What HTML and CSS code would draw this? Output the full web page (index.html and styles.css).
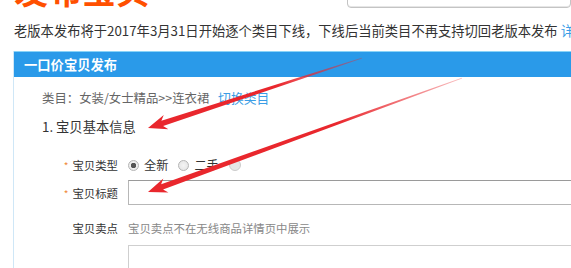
FILE: index.html
```html
<!DOCTYPE html>
<html>
    <head>
        <title>一口价宝贝发布</title>
        <link rel="stylesheet" href="styles.css">
    </head>
    <body>
        <div class="top">
            <div class="brand">发布宝贝</div>
            <div class="search"></div>
        </div>

        <p class="notice">老版本发布将于2017年3月31日开始逐个类目下线，下线后当前类目不再支持切回老版本发布 <a href="#">详情</a></p>

        <div class="panel">
            <div class="panel-head">一口价宝贝发布</div>
            <div class="panel-body">
                <p class="category">类目：女装/女士精品&gt;&gt;连衣裙 <a href="#">切换类目</a></p>
                <h2 class="step">1. 宝贝基本信息</h2>

                <div class="row row-type">
                    <label class="label"><i>*</i>宝贝类型</label>
                    <div class="options">
                        <label class="option"><input type="radio" name="type" checked>全新</label>
                        <label class="option"><input type="radio" name="type">二手</label>
                        <label class="option"><input type="radio" name="type" disabled></label>
                    </div>
                </div>

                <div class="row row-title">
                    <label class="label"><i>*</i>宝贝标题</label>
                    <input class="text-input" type="text">
                </div>

                <div class="row row-point">
                    <label class="label">宝贝卖点</label>
                    <span class="hint">宝贝卖点不在无线商品详情页中展示</span>
                </div>

                <div class="row row-area">
                    <span class="label"></span>
                    <textarea class="text-area"></textarea>
                </div>
            </div>
        </div>

        <!-- red annotation arrows drawn over the form -->
        <svg class="marks" width="571" height="268" viewBox="0 0 571 268">
            <defs>
                <linearGradient id="fade1" gradientUnits="userSpaceOnUse" x1="0" y1="0" x2="225" y2="0">
                    <stop offset="0" stop-color="#e9272d"/>
                    <stop offset="0.6" stop-color="#e9272d"/>
                    <stop offset="1" stop-color="#e9272d" stop-opacity="0.35"/>
                </linearGradient>
                <linearGradient id="fade2" gradientUnits="userSpaceOnUse" x1="0" y1="0" x2="334" y2="0">
                    <stop offset="0" stop-color="#e9272d"/>
                    <stop offset="0.6" stop-color="#e9272d"/>
                    <stop offset="1" stop-color="#e9272d" stop-opacity="0.3"/>
                </linearGradient>
            </defs>
            <polygon transform="translate(148 128) rotate(-18.1)" fill="url(#fade1)"
                points="0,0 19,-7.5 15,-2.8 225,-0.4 225,0.4 15,2.8 19,7.5"/>
            <polygon transform="translate(148 192) rotate(-19.95)" fill="url(#fade2)"
                points="0,0 19,-7.5 15,-2.8 334,-0.4 334,0.4 15,2.8 19,7.5"/>
        </svg>
    </body>
</html>
```

FILE: styles.css
```css
* {
    margin: 0;
    padding: 0;
    box-sizing: border-box;
}

html,
body {
    height: 268px;
    overflow: hidden;
}

body {
    width: 571px;
    position: relative;
    background: #fff;
    color: #333;
    font-family: "Noto Sans CJK SC", "Noto Sans", sans-serif;
}

a {
    color: #3a9de6;
    text-decoration: none;
}

.top {
    height: 9px;
    overflow: hidden;
    display: flex;
    align-items: flex-end;
}
.brand {
    margin-left: 14px;
    font-size: 34px;
    line-height: 34px;
    font-weight: 700;
    color: #ff5000;
    margin-bottom: 2px;
    width: 333px;
    flex-shrink: 0;
}
.search {
    flex: 1;
    height: 30px;
    margin-bottom: 1px;
    border: 1px solid #c4c4c4;
    border-radius: 4px;
    box-shadow: inset 0 -1px 0 #e6e6e6;
}

.notice {
    margin: 12px 0 10px 14px;
    font-size: 13.3px;
    line-height: 20px;
    white-space: nowrap;
}

.panel {
    height: 217px;
    overflow: hidden;
    margin-left: 13px;
    border-left: 1px solid #cfe7f7;
}
.panel-head {
    height: 26px;
    padding-left: 10px;
    background: #2a9ae9;
    border-top: 1px solid #8ad3f7;
    color: #fff;
    font-size: 13.3px;
    font-weight: 700;
    line-height: 25px;
}
.panel-body {
    padding: 11px 0 0 28px;
}

.category {
    font-size: 12.4px;
    line-height: 20px;
    color: #666;
}
.category a {
    margin-left: 6px;
    font-size: 12.8px;
}

.step {
    margin-top: 9px;
    font-size: 13.3px;
    font-weight: 400;
    line-height: 20px;
    color: #333;
}

.row {
    display: flex;
    align-items: center;
    margin-left: -28px;
    font-size: 11.4px;
}
.label {
    width: 104px;
    margin-right: 10px;
    text-align: right;
    color: #333;
    flex-shrink: 0;
}
.label i {
    font-style: normal;
    color: #f08a3c;
    margin-right: 4px;
    font-size: 10px;
}

.row-type {
    margin-top: 18px;
    height: 20px;
}
.options {
    display: flex;
    align-items: center;
}
.option {
    display: flex;
    align-items: center;
    margin-right: 10px;
    font-size: 12.2px;
}
.option input {
    appearance: none;
    width: 11px;
    height: 11px;
    margin-right: 5px;
    border: 1px solid #b5b5b5;
    border-radius: 50%;
    background: radial-gradient(circle, #f4f4f4 0, #e2e2e2 100%);
}
.option input:checked {
    background: radial-gradient(circle, #555 0, #555 2.5px, #f0f0f0 3px, #e4e4e4 100%);
}
.option input:disabled {
    width: 12px;
    height: 12px;
    border-color: #ccc;
    background: #e6e6e6;
}

.row-title {
    margin-top: 5px;
    height: 25px;
}
.text-input {
    flex: 1;
    height: 25px;
    margin-right: -20px;
    border: 1px solid #b7b7b7;
    border-top-color: #9a9a9a;
    background: #fff;
}

.row-point {
    margin-top: 13px;
    height: 20px;
}
.hint {
    color: #888;
    font-size: 11.4px;
}

.row-area {
    margin-top: 7px;
    align-items: flex-start;
}
.text-area {
    flex: 1;
    height: 60px;
    margin-right: -20px;
    border: 1px solid #cfcfcf;
    resize: none;
}

.marks {
    position: absolute;
    top: 0;
    left: 0;
    pointer-events: none;
}
```
